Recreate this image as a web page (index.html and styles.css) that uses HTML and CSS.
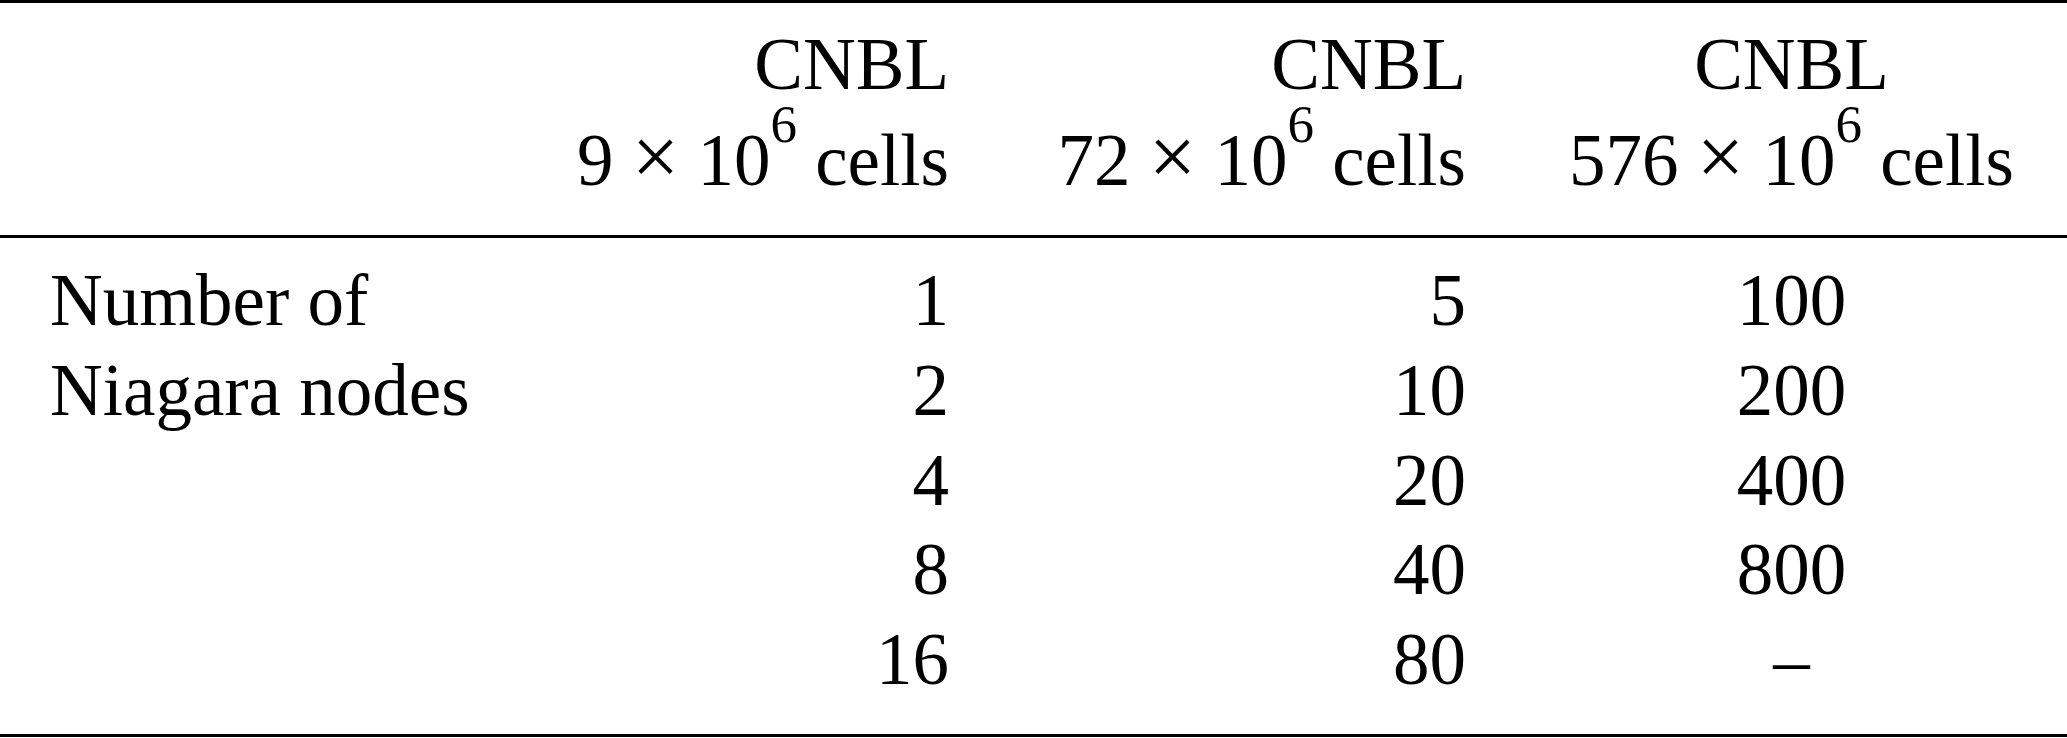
FILE: index.html
```html
<!DOCTYPE html>
<html lang="en">
<head>
    <meta charset="UTF-8">
    <title>CNBL nodes</title>
    <link rel="stylesheet" href="styles.css">
</head>
<body>
    <table class="cells-table">
        <colgroup>
            <col class="col-label">
            <col class="col-small">
            <col class="col-medium">
            <col class="col-large">
        </colgroup>
        <thead>
            <tr>
                <th></th>
                <th class="num">CNBL<br>9 <span class="op">×</span> 10<sup>6</sup> cells</th>
                <th class="num">CNBL<br>72 <span class="op">×</span> 10<sup>6</sup> cells</th>
                <th class="mid">CNBL<br>576 <span class="op">×</span> 10<sup>6</sup> cells</th>
            </tr>
        </thead>
        <tbody>
            <tr class="first">
                <td>Number of</td>
                <td class="num">1</td>
                <td class="num">5</td>
                <td class="mid">100</td>
            </tr>
            <tr>
                <td>Niagara nodes</td>
                <td class="num">2</td>
                <td class="num">10</td>
                <td class="mid">200</td>
            </tr>
            <tr>
                <td></td>
                <td class="num">4</td>
                <td class="num">20</td>
                <td class="mid">400</td>
            </tr>
            <tr>
                <td></td>
                <td class="num">8</td>
                <td class="num">40</td>
                <td class="mid">800</td>
            </tr>
            <tr class="last">
                <td></td>
                <td class="num">16</td>
                <td class="num">80</td>
                <td class="mid">–</td>
            </tr>
        </tbody>
    </table>
</body>
</html>
```

FILE: styles.css
```css
body {
    margin: 0;
    background: #fff;
    color: #000;
    font-family: "Liberation Serif", "Times New Roman", serif;
}
.cells-table {
    width: 2067px;
    table-layout: fixed;
    border-collapse: collapse;
    font-size: 73px;
    border-top: 3px solid #000;
    border-bottom: 3px solid #000;
}
.col-label {
    width: 525px;
}
.col-small {
    width: 474px;
}
.col-medium {
    width: 517px;
}
.col-large {
    width: 551px;
}
th, td {
    padding: 0 50px;
    font-weight: normal;
    text-align: left;
    white-space: nowrap;
}
thead th {
    line-height: 95.7px;
    padding-top: 14px;
    padding-bottom: 27px;
    border-bottom: 3px solid #000;
}
tbody td {
    line-height: 89.6px;
}
tbody .first td {
    padding-top: 18px;
}
tbody .last td {
    padding-bottom: 30px;
}
.num {
    text-align: right;
}
th.mid, td.mid {
    text-align: center;
}
.op {
    font-size: 84px;
    line-height: 0;
}
sup {
    font-size: 53px;
    line-height: 0;
    vertical-align: 0.82em;
}
```
